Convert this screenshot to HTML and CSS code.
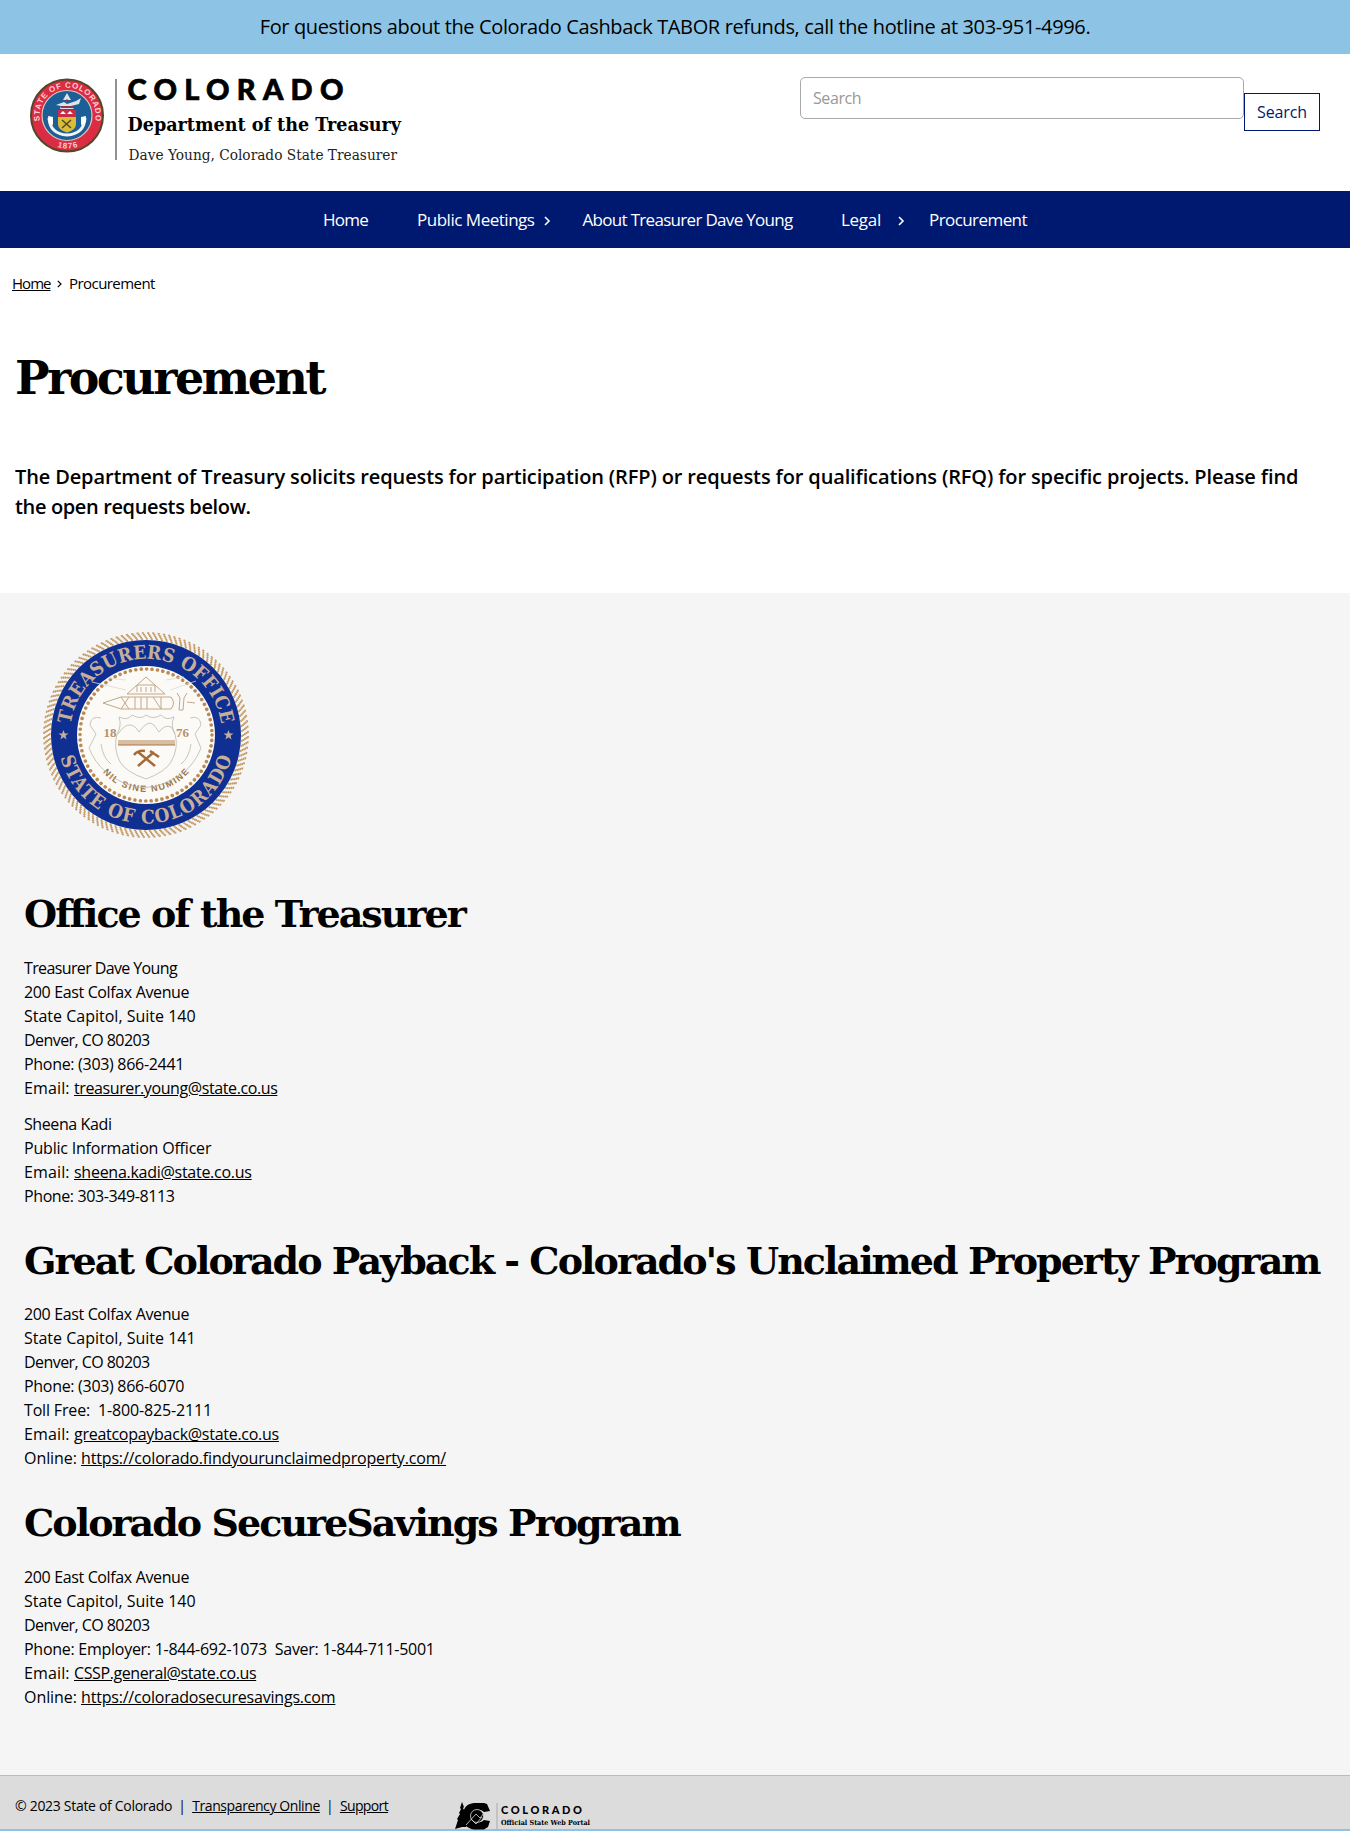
FILE: index.html
```html
<!DOCTYPE html>
<html lang="en">
<head>
<meta charset="utf-8">
<title>Procurement</title>
<link rel="stylesheet" href="styles.css">
</head>
<body>
<div class="alert">For questions about the Colorado Cashback TABOR refunds, call the hotline at 303-951-4996.</div>
<header class="header">
  <svg class="brand" width="390" height="100" viewBox="0 0 390 100" role="img" aria-label="Colorado Department of the Treasury">
    <defs>
      <path id="st" d="M10.400 43.800A28 28 0 1 1 64.600 43.800"/>
      <path id="sb" d="M4.500 36.500A33 33 0 0 0 70.500 36.500"/>
    </defs>
    <circle cx="37" cy="36.500" r="36" fill="#dc2c44" stroke="#54452b" stroke-width="2"/>
    <circle cx="37" cy="36.500" r="25" fill="#1c5f97" stroke="#d9c9bd" stroke-width="1.200"/>
    <text class="st"><textPath href="#st" startOffset="50%" text-anchor="middle" textLength="98">STATE OF COLORADO</textPath></text>
    <text class="st"><textPath href="#sb" startOffset="50%" text-anchor="middle" textLength="21">1876</textPath></text>
    <path d="M37 14l4 7h-8zM26 26l8-3 3 2 9-3 5-3-2 6-8 2 3 3H30l1-3z" fill="#dfe2e6"/>
    <path d="M34 23l3-3 3 3zM31 27h12v2H31z" fill="#8c3750"/>
    <path d="M28 31h18v7H28z" fill="#c62d49"/><path d="M30 35l3-3 3 3zm7 0l3-3 3 3z" fill="#fff"/>
    <path d="M28 38h18v7q0 6-9 8.500Q28 51 28 45z" fill="#d9bd35"/>
    <path d="M32 41l9 8m0-8l-9 8" stroke="#54452b" stroke-width="1.500"/>
    <path d="M19 39q1 16 18 17 17-1 18-17" fill="none" stroke="#f3f3f3" stroke-width="3"/>
    <path d="M18 37l5 1v8l-4-2zm38 0l-5 1v8l4-2z" fill="#fff"/>
    <path d="M86 0v81" stroke="#555" stroke-width="1.300"/>
    <text class="b1" x="97.500" y="20.500" textLength="216">COLORADO</text>
    <text class="b2" x="97.500" y="51.500" textLength="273.500" lengthAdjust="spacingAndGlyphs">Department of the Treasury</text>
    <text class="b3" x="98.500" y="81" textLength="268.500" lengthAdjust="spacingAndGlyphs">Dave Young, Colorado State Treasurer</text>
  </svg>
  <form class="search">
    <div class="field"><span class="k4">Search</span></div>
    <div class="submit"><span class="k1">Search</span></div>
  </form>
</header>
<nav class="nav">
  <a class="n1">Home</a>
  <a class="n2">Public Meetings</a>
  <svg class="chev c1" width="7" height="10" viewBox="0 0 7 10"><path d="M1 1l4 4-4 4"/></svg>
  <a class="n3">About Treasurer Dave Young</a>
  <a class="n4">Legal</a>
  <svg class="chev c2" width="7" height="10" viewBox="0 0 7 10"><path d="M1 1l4 4-4 4"/></svg>
  <a class="n5">Procurement</a>
</nav>
<main class="main">
  <div class="crumbs"><a class="u k9">Home</a><svg class="sep" width="5" height="8" viewBox="0 0 5 8"><path d="M.8 .8L4 4 .8 7.200"/></svg><span class="k5">Procurement</span></div>
  <h1>Procurement</h1>
  <p class="lead">The Department of Treasury solicits requests for participation (RFP) or requests for qualifications (RFQ) for specific projects. Please find<br><span class="k35">the open requests below.</span></p>
</main>
<section class="office">
  <svg class="seal" width="210" height="210" viewBox="-105 -105 210 210" role="img" aria-label="Treasurers Office seal">
    <defs>
      <path id="t1" d="M-73.700 18.400A76 76 0 1 1 73.700 18.400"/>
      <path id="t2" d="M-88.500 0A88.500 88.500 0 0 0 88.500 0"/>
      <path id="t3" d="M-57 0A57 57 0 0 0 57 0"/>
    </defs>
    <g class="rope">
      <circle r="96" pathLength="360"/>
      <circle r="97.500" pathLength="360" stroke-dashoffset=".6"/>
      <circle r="99" pathLength="360" stroke-dashoffset="1.200"/>
      <circle r="100.500" pathLength="360" stroke-dashoffset="1.800"/>
      <circle r="102" pathLength="360" stroke-dashoffset="2.400"/>
    </g>
    <circle r="95" fill="#0f2f92"/><circle r="69" fill="#fbfaf6"/>
    <circle r="66" fill="none" stroke="#b98a55" stroke-width="3.600" stroke-linecap="round" stroke-dasharray="0.010 5.449"/>
    <text class="ring"><textPath href="#t1" startOffset="50%" text-anchor="middle" textLength="217">TREASURERS OFFICE</textPath></text>
    <text class="ring"><textPath href="#t2" startOffset="50%" text-anchor="middle" textLength="232">STATE OF COLORADO</textPath></text>
    <text class="motto"><textPath href="#t3" startOffset="50%" text-anchor="middle" textLength="98">NIL SINE NUMINE</textPath></text>
    <path id="star" d="M-82.500-5l1.300 3.500h3.700l-3 2.300 1.100 3.700-3.100-2.200-3.100 2.200 1.100-3.700-3-2.300h3.700z" fill="#c7ae98"/>
    <use href="#star" x="165"/>
    <g fill="none" stroke="#b9b7ae" stroke-width=".8">
      <path d="M-27-18q9 4 13-2 9 5 14 0 7 5 15 0 5 6 13 2-4 9 1 17 4 14-4 28Q19 37 0 44-20 37-26 27q-7-14-3-28 5-8 2-17z"/>
      <path d="M-28-1q7-10 12-9 5 0 9 7 9-13 15-7l5 7q6-8 12-5 2 2 4 7"/>
      <path d="M-45-17q-10-3-11 7l6 9-7 14q6 15 17 24 38 31 78 0 11-9 17-24L49-1l6-9q-1-10-11-7M-45 9q2 14 10 20M45 9q-2 14-10 20"/>
      <path d="M-20-55L-38-57M-20-45l-34-8M20-55l18-3M24-45l26-9" stroke="#dcd9d0"/>
    </g>
    <path d="M0-58l19 17h-38zM-9-43v-7H9v7M-5-43v-5m5 5v-5m5 5v-5M-43-32l18-6h50q5 6 0 12h-50zM-25-38l8 12m0-12l-8 12m14-12v12m6-12v12m6-12v12m6-12l8 12m0-12L15-26M31-42l3 5-1 12h4l1-12 3-5M41-33l8 1" fill="none" stroke="#c4a687"/>
    <path d="M-28 5h57v5h-57z" fill="#d8bea3"/><path d="M-28 10h57" stroke="#a67848"/>
    <path d="M-8 31L8 17M9 31L-8 17M-12 20q4-5 11-4M4 16l9 6" stroke="#a56a35" stroke-width="2.500" fill="none"/>
    <text class="yr" x="-42.500" y="2">18</text><text class="yr" x="30" y="2">76</text>
  </svg>
  <h2>Office of the Treasurer</h2>
  <div class="ln k6">Treasurer Dave Young</div>
  <div class="ln k35">200 East Colfax Avenue</div>
  <div class="ln">State Capitol, Suite 140</div>
  <div class="ln k5">Denver, CO 80203</div>
  <div class="ln k3">Phone: (303) 866-2441</div>
  <div class="ln"><span class="p1">Email:&nbsp;</span><a class="u k4">treasurer.young@state.co.us</a></div>
  <div class="ln gap k4">Sheena Kadi</div>
  <div class="ln k2">Public Information Officer</div>
  <div class="ln"><span class="p1">Email:&nbsp;</span><a class="u k25">sheena.kadi@state.co.us</a></div>
  <div class="ln k4">Phone: 303-349-8113</div>
  <h2>Great Colorado Payback - Colorado's Unclaimed Property Program</h2>
  <div class="ln k35">200 East Colfax Avenue</div>
  <div class="ln">State Capitol, Suite 141</div>
  <div class="ln k5">Denver, CO 80203</div>
  <div class="ln k3">Phone: (303) 866-6070</div>
  <div class="ln k15">Toll Free:&nbsp; 1-800-825-2111</div>
  <div class="ln"><span class="p1">Email:&nbsp;</span><a class="u k25">greatcopayback@state.co.us</a></div>
  <div class="ln"><span class="k05">Online:&nbsp;</span><a class="u k15">https://colorado.findyourunclaimedproperty.com/</a></div>
  <h2>Colorado SecureSavings Program</h2>
  <div class="ln k35">200 East Colfax Avenue</div>
  <div class="ln">State Capitol, Suite 140</div>
  <div class="ln k5">Denver, CO 80203</div>
  <div class="ln k25">Phone: Employer: 1-844-692-1073&nbsp; Saver: 1-844-711-5001</div>
  <div class="ln"><span class="p1">Email:&nbsp;</span><a class="u k4">CSSP.general@state.co.us</a></div>
  <div class="ln"><span class="k05">Online:&nbsp;</span><a class="u k2">https://coloradosecuresavings.com</a></div>
</section>
<footer class="foot">
  <span class="k3">© 2023 State of Colorado</span><i>|</i><a class="u k4">Transparency Online</a><i>|</i><a class="u k6">Support</a>
  <svg class="portal" width="140" height="28" viewBox="0 0 140 28" role="img" aria-label="Colorado Official State Web Portal">
    <path d="M7 0l2 5-1 1 2 4-1 1 3 5-1 1 2 5-2 3H7l-7 2 3-9-1-1 3-5-1-1 2-4-1-1z"/>
    <path d="M32 2l3 7-6 1q-4-4-8 0v8q4 4 8 0l6 1-2 6-4 2.500H19Q8 26 8 14 8 2 19 1h10z"/>
    <circle cx="22" cy="14" r="6.500"/>
    <circle cx="22" cy="14" r="6.500" fill="none" stroke="#ddd" stroke-width=".8"/>
    <path d="M11 23l10-11 4 4 5-6M16 17l5 5 6-7" fill="none" stroke="#ddd" stroke-width=".8"/>
    <path d="M42 1v26" stroke="#aaa"/>
    <text class="p-name" x="46" y="11.500" textLength="81">COLORADO</text>
    <text class="p-sub" x="46" y="23" textLength="89" lengthAdjust="spacingAndGlyphs">Official State Web Portal</text>
  </svg>
</footer>
</body>
</html>
```
FILE: styles.css
```css
*{box-sizing:border-box}
body{margin:0;background:#fff;color:#000;font:16px/24px "Open Sans",sans-serif;height:1831px;overflow:hidden}
span,a,h1,h2,.ln,.lead{white-space:nowrap}
svg{overflow:visible;flex-shrink:0}
.u{text-decoration:underline}

/* tracking steps */
.p1{letter-spacing:.14px}
.k05{letter-spacing:-.06px}
.k1{letter-spacing:-.11px}
.k15{letter-spacing:-.16px}
.k2{letter-spacing:-.2px}
.k25{letter-spacing:-.27px}
.k3{letter-spacing:-.3px}
.k35{letter-spacing:-.36px}
.k4{letter-spacing:-.4px}
.k5{letter-spacing:-.56px}
.k6{letter-spacing:-.62px}
.k9{letter-spacing:-.97px}

.alert{height:54px;background:#8dc4e5;text-align:center;font-size:20px;line-height:54px;letter-spacing:-.36px}
.header{height:137px;padding:25px 30px 0;display:flex;justify-content:space-between}
.st{font:bold 8px "Liberation Sans",sans-serif;fill:#ffd0d2}
.b1{font:900 29px Lato,sans-serif;stroke:#000;stroke-width:.7px}
.b2{font:bold 19px "DejaVu Serif",serif}
.b3{font:300 15px "DejaVu Serif",serif;fill:#222}
.search{display:flex;align-items:flex-start}
.field{width:444px;height:42px;margin-top:-2px;border:1px solid #aaa;border-radius:5px;padding:0 12px;line-height:40px;color:#999}
.submit{width:76px;height:38px;margin-top:14px;border:1px solid #001970;color:#001970;line-height:36px;padding:0 12px}

.nav{height:57px;background:#001970;color:#fff;display:flex;align-items:center;padding-left:323px;font-size:17px}
.chev,.sep{fill:none;stroke:#fff;stroke-width:1.6}
.sep{stroke:#000;stroke-width:1.2;margin:2px 7px 0 6.5px}
.n1{width:45px;letter-spacing:-.76px}
.n2{width:117.5px;margin-left:49px;letter-spacing:-.48px}
.c1{margin:2px 0 0 9px}
.n3{width:210px;margin-left:32px;letter-spacing:-.69px}
.n4{width:40px;margin-left:48.5px;letter-spacing:-.28px}
.c2{margin:2px 0 0 17px}
.n5{margin-left:24px;letter-spacing:-.57px}

.main{height:345px;padding:0 15px}
.crumbs{font-size:15px;padding-top:23px;margin-left:-3px;display:flex;align-items:center}
h1,h2{font-family:"DejaVu Serif",serif;font-weight:bold;margin:0}
h1{font-size:46px;line-height:56px;margin-top:55px;letter-spacing:-2.55px}
h2{font-size:38px;line-height:48px;margin:29px 0 17.5px;letter-spacing:-1.96px}
.lead{font-size:20px;line-height:30px;font-weight:600;margin:56px 0 0;letter-spacing:-.13px}

.office{height:1182px;background:#f5f5f5;padding:37px 24px 0}
.seal{display:block;margin-left:17px}
.seal+h2{margin-top:50px}
.gap{margin-top:12px}
.rope circle{fill:none;stroke:#c59c68;stroke-width:1.7;stroke-dasharray:1.2 1.8}
.ring{font:bold 19px "DejaVu Serif Condensed","DejaVu Serif",serif;font-stretch:condensed;fill:#c7ae98}
.motto{font:bold 9px "Liberation Sans",sans-serif;fill:#9c7444}
.yr{font:bold 13px "Liberation Serif",serif;fill:#b5916b}

.foot{height:56px;background:#dcdcdc;border-top:1px solid #bbb;border-bottom:2px solid #8dc4e5;padding:18px 15px 0;font-size:14px;display:flex;align-items:flex-start}
.foot i{font-style:normal;width:20px;text-align:center}
.portal{margin:8px 0 0 66.5px}
.p-name{font:900 11px Lato,sans-serif}
.p-sub{font:bold 7px "DejaVu Serif",serif}
```
